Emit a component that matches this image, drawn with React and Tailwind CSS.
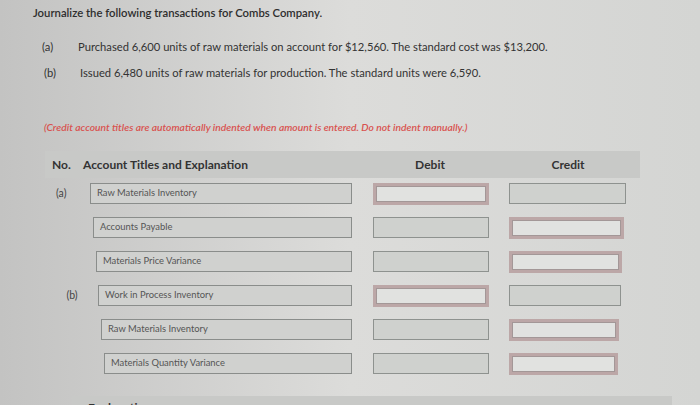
import React from 'react';

const rows = [
  { no: '(a)', title: 'Raw Materials Inventory', indent: 0, debit: 'open', credit: 'gray' },
  { no: '', title: 'Accounts Payable', indent: 3, debit: 'gray', credit: 'open' },
  { no: '', title: 'Materials Price Variance', indent: 6, debit: 'gray', credit: 'open' },
  { no: '(b)', title: 'Work in Process Inventory', indent: 8, debit: 'open', credit: 'gray' },
  { no: '', title: 'Raw Materials Inventory', indent: 11, debit: 'gray', credit: 'open' },
  { no: '', title: 'Materials Quantity Variance', indent: 14, debit: 'gray', credit: 'open' },
];

const AmountBox = ({ kind }) =>
  kind === 'open' ? (
    <div className="h-[22px] border-[3px] border-[#bca7a7] bg-[#e1e2e0] shadow-[inset_0_0_0_1px_#a39797]"></div>
  ) : (
    <div className="h-[21px] border border-[#8e928f] bg-[#cfd1ce]"></div>
  );

const App = () => {
  return (
    <div
      className="w-[700px] h-[405px] overflow-hidden bg-gradient-to-r from-[#c3c3c2] via-[#dcdcda] to-[#d4d5d3] text-[#333]"
      style={{ fontFamily: 'Lato, "Open Sans", sans-serif' }}
    >
      <div className="pl-[33px] pt-[5px]">
        <h1 className="text-[11.3px] font-semibold text-[#2e2e2e] leading-[16px]">
          Journalize the following transactions for Combs Company.
        </h1>

        <div className="mt-[18px] pl-[9px] space-y-[11px] text-[11.2px] text-[#333] leading-[15px]">
          <div className="flex">
            <span className="w-[36px]">(a)</span>
            <span>Purchased 6,600 units of raw materials on account for $12,560. The standard cost was $13,200.</span>
          </div>
          <div className="flex">
            <span className="w-[38px] pl-[2px]">(b)</span>
            <span>Issued 6,480 units of raw materials for production. The standard units were 6,590.</span>
          </div>
        </div>

        <p className="mt-[40px] pl-[11px] text-[10.3px] italic font-semibold text-[#d9524f] leading-[14px]">
          (Credit account titles are automatically indented when amount is entered. Do not indent manually.)
        </p>

        <div className="mt-[17px] ml-[12px] w-[595px] h-[27px] bg-[#c8c9c7] flex items-center text-[12px] font-bold text-[#333]">
          <span className="w-[38px] pl-[7px]">No.</span>
          <span className="w-[300px]">Account Titles and Explanation</span>
          <span className="w-[94px] text-center">Debit</span>
          <span className="w-[130px] ml-[26px] text-center">Credit</span>
        </div>

        <div className="ml-[12px] mt-[5px] flex flex-col gap-[13px]">
          {rows.map((r, i) => (
            <div key={i} className="flex items-center h-[21px]">
              <div className="w-[45px] text-[10.5px] text-[#444]" style={{ paddingLeft: 11 + r.indent * 1.3 }}>
                {r.no}
              </div>
              <div className="w-[262px]" style={{ paddingLeft: r.indent }}>
                <div className="h-[21px] border border-[#8a8d8b] bg-[#d0d1cf] flex items-center pl-[6px] text-[9.4px] text-[#555]">
                  {r.title}
                </div>
              </div>
              <div className="w-[116px] ml-[21px]">
                <AmountBox kind={r.debit} />
              </div>
              <div className="ml-[20px]" style={{ width: 117 - r.indent * 0.6 }}>
                <AmountBox kind={r.credit} />
              </div>
            </div>
          ))}
        </div>

        <div className="mt-[22px] ml-[39px] w-[600px] h-[20px] bg-[#c8c9c7] pl-[16px] pt-[5px] text-[12px] font-bold text-[#333] leading-[14px]">
          Explanation
        </div>
      </div>
    </div>
  );
};

export default App;
